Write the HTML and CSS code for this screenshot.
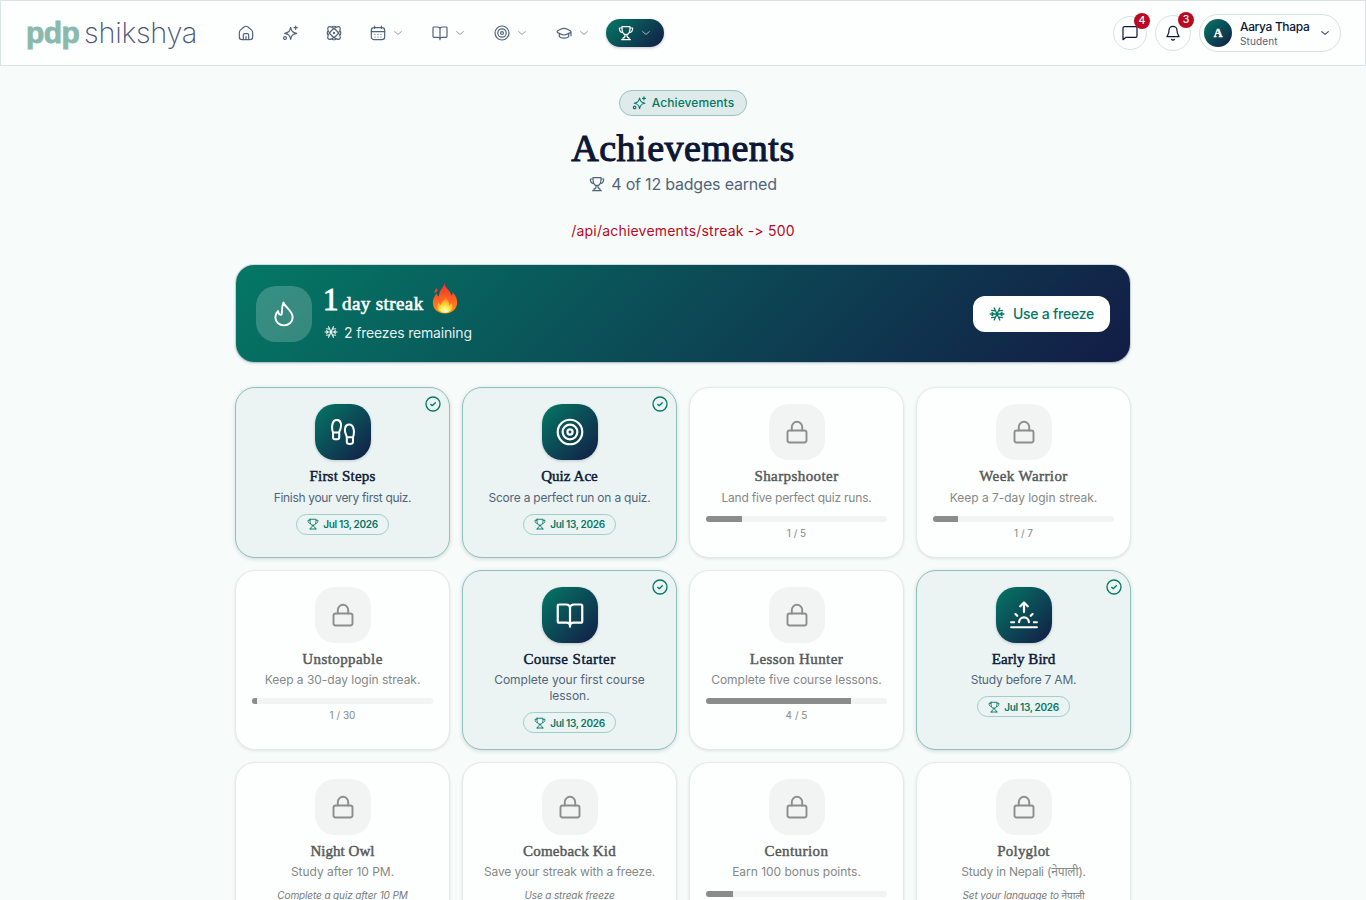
FILE: index.html
```html
<!DOCTYPE html>
<html lang="en">
<head>
<meta charset="utf-8">
<title>Achievements</title>
<link rel="stylesheet" href="styles.css">
</head>
<body>
<svg class="defs" width="0" height="0">
  <defs>
    <linearGradient id="fire" x1="0" y1="0" x2="0" y2="1"><stop offset="0" stop-color="#e8302c"/><stop offset=".55" stop-color="#ff6422"/><stop offset="1" stop-color="#ff9b12"/></linearGradient>
    <radialGradient id="glow" cx=".5" cy=".9" r=".75"><stop offset="0" stop-color="#fffbe0"/><stop offset=".4" stop-color="#ffe94d"/><stop offset="1" stop-color="#ff8a1e"/></radialGradient>
  </defs>
  <symbol id="home" viewBox="0 0 24 24"><path d="M2 11.500c0-2 .6-3 2-4.200l5-4.300c2-1.500 4-1.500 6 0l5 4.300c1.400 1.200 2 2.200 2 4.200V18c0 2.800-1 4-4 4H6c-3 0-4-1.200-4-4zM8 22v-7c0-1.400.7-2 2-2h4c1.300 0 2 .6 2 2v7M12 17.500V22"/></symbol>
  <symbol id="sparkles" viewBox="0 0 24 24"><path d="M13 3.500c1.200 6 3 7.800 9 9-6 1.200-7.800 3-9 9-1.200-6-3-7.800-9-9 6-1.200 7.800-3 9-9zM20.500 1.500v5M18 4h5"/><circle cx="4.500" cy="19.500" r="2.200"/></symbol>
  <symbol id="atom" viewBox="0 0 24 24"><ellipse cx="12" cy="12" rx="12.300" ry="5.200" transform="rotate(45 12 12)"/><ellipse cx="12" cy="12" rx="12.300" ry="5.200" transform="rotate(-45 12 12)"/><path d="M9.500 2.300q2.500-.8 5 0M9.500 21.700q2.500.8 5 0M2.300 9.500q-.8 2.500 0 5M21.700 9.500q.8 2.500 0 5"/><circle cx="12" cy="12" r=".8"/></symbol>
  <symbol id="calendar" viewBox="0 0 24 24"><rect x="2" y="4" width="20" height="18" rx="4"/><path d="M7 1.800V5M17 1.800V5M2 10h20M7.500 14h.01M12 14h.01M16.500 14h.01M7.500 18h.01M12 18h.01M16.500 18h.01"/></symbol>
  <symbol id="book" viewBox="0 0 24 24"><path d="M12 6.200C12 4.200 10.500 3 8.500 3H2.800c-.8 0-1.300.5-1.300 1.300v13c0 .8.500 1.300 1.300 1.300H9c1.800 0 3 .8 3 2.400 0-1.600 1.200-2.400 3-2.400h6.200c.8 0 1.300-.5 1.300-1.300v-13c0-.8-.5-1.300-1.300-1.300h-5.700c-2 0-3.500 1.200-3.500 3.200zM12 6.200V22"/></symbol>
  <symbol id="target" viewBox="0 0 24 24"><circle cx="12" cy="12" r="10.500"/><circle cx="12" cy="12" r="6.300"/><circle cx="12" cy="12" r="2.200"/></symbol>
  <symbol id="cap" viewBox="0 0 24 24"><path d="M1.500 10c0-1.200 7-5 10.500-5s10.500 3.800 10.500 5-7 5-10.500 5-10.500-3.800-10.500-5zM5 12.500v5c2 3 12 3 14 0v-5M22.500 10v6"/></symbol>
  <symbol id="trophy" viewBox="0 0 24 24"><path d="M6 2.500h12c.2 6.200-.8 12-6 12s-6.200-5.800-6-12zM6 4.500H2c0 4 1.500 6.500 5 7M18 4.500h4c0 4-1.500 6.500-5 7M10.800 14.500c0 3-1 4.500-3.300 5v2.500M13.300 14.500c0 3 1 4.500 3.300 5V22M5.500 22h13"/></symbol>
  <symbol id="down" viewBox="0 0 24 24"><path d="M4 8.500l8 7 8-7"/></symbol>
  <symbol id="chat" viewBox="0 0 24 24"><path d="M3.500 2.500h17A2 2 0 0 1 22.500 4.500v12a2 2 0 0 1-2 2H6l-4.500 3.500V4.500a2 2 0 0 1 2-2z"/></symbol>
  <symbol id="bell" viewBox="0 0 24 24"><path d="M6 8a6 6 0 0 1 12 0c0 7 3 8 3 9.500H3C3 16 6 15 6 8zM10 21.500a2.300 2.300 0 0 0 4 0"/></symbol>
  <symbol id="flame" viewBox="0 0 24 24"><path d="M12 22.500c-4.500 0-8-3.200-8-7.500 0-2.500 1-4.300 2.500-5.700.3 2.200 1 3.200 2.300 3.500 2.500.3 0-5 2.700-11.300C13 6 20 9 20 15c0 4.300-3.500 7.500-8 7.500z"/></symbol>
  <symbol id="snow" viewBox="0 0 24 24"><path d="M12 12L7.800 3M12 12l4.200-9M12 12H1.800M12 12h10.400M12 12l-4.200 9M12 12l4.200 9M4 6.500l5.200.8M20 6.500l-5.200.8M4 17.500l5.200-.8M20 17.500l-5.200-.8M4.500 9.500L7 12l-2.500 2.500M19.500 9.500L17 12l2.500 2.500"/></symbol>
  <symbol id="lock" viewBox="0 0 24 24"><rect x="2.500" y="10.500" width="19" height="12" rx="2.200"/><path d="M6.800 10.500V7a5.200 5.200 0 0 1 10.400 0v3.500"/></symbol>
  <symbol id="check" viewBox="0 0 24 24"><circle cx="12" cy="12" r="10.500"/><path d="M8.500 12.500l2.300 2L15.500 10"/></symbol>
  <symbol id="steps" viewBox="0 0 24 24"><path d="M2.800 12.500C1.500 9.500 1 .8 6.500.8c4 0 4.300 5.200 3 8.700-.5 1.200-1 2-1 3zM2.800 12.500h5.700V17c0 2.300-5.700 2.300-5.700 0zM21.200 16.800c1.300-3 1.800-11.700-3.700-11.700-4 0-4.300 5.200-3 8.700.5 1.200 1 2 1 3zM21.200 16.800h-5.700v4.500c0 2.300 5.700 2.300 5.700 0z"/></symbol>
  <symbol id="sunrise" viewBox="0 0 24 24"><path d="M12 9.500V1.500M8.800 4.500L12 1.300l3.200 3.200M1 22.500h22M1 18.200h2.500M20.500 18.200H23M4.700 11.200l1.500 1.500M19.300 11.200l-1.500 1.500M7.800 18.200a4.200 4.200 0 0 1 8.400 0"/></symbol>
</svg>

<header class="topbar">
  <div class="logo"><b class="logo-pdp">pdp</b><span class="logo-name">shikshya</span></div>
  <nav class="nav">
    <a class="nav-item"><svg class="i16"><use href="#home"/></svg></a>
    <a class="nav-item"><svg class="i16"><use href="#sparkles"/></svg></a>
    <a class="nav-item"><svg class="i16"><use href="#atom"/></svg></a>
    <a class="nav-item"><svg class="i16"><use href="#calendar"/></svg><svg class="chev"><use href="#down"/></svg></a>
    <a class="nav-item"><svg class="i16"><use href="#book"/></svg><svg class="chev"><use href="#down"/></svg></a>
    <a class="nav-item"><svg class="i16"><use href="#target"/></svg><svg class="chev"><use href="#down"/></svg></a>
    <a class="nav-item"><svg class="i16"><use href="#cap"/></svg><svg class="chev"><use href="#down"/></svg></a>
    <a class="nav-item active"><svg class="i16"><use href="#trophy"/></svg><svg class="chev"><use href="#down"/></svg></a>
  </nav>
  <div class="actions">
    <div class="round chat"><svg class="i16"><use href="#chat"/></svg><span class="count">4</span></div>
    <div class="round bell"><svg class="i16"><use href="#bell"/></svg><span class="count">3</span></div>
    <div class="profile">
      <span class="avatar">A</span>
      <div class="who"><span class="name">Aarya Thapa</span><span class="role">Student</span></div>
      <svg class="pchev"><use href="#down"/></svg>
    </div>
  </div>
</header>

<main class="page">
  <div class="tag"><svg class="i14"><use href="#sparkles"/></svg><span class="tag-text">Achievements</span></div>
  <h1 class="title">Achievements</h1>
  <div class="summary"><svg class="i16"><use href="#trophy"/></svg><span class="summary-text">4 of 12 badges earned</span></div>
  <p class="error">/api/achievements/streak -&gt; 500</p>

  <section class="streak">
    <div class="streak-icon"><svg class="i26"><use href="#flame"/></svg></div>
    <div class="streak-body">
      <div class="streak-line"><span class="num">1</span><span class="days">day streak</span>
        <svg class="fire" viewBox="0 0 26 32"><path fill="url(#fire)" d="M12.500 0c.2 4 3.500 6 5.500 9 .8 1.200 1.300 2.600 1.500 4 1-.8 1.500-2 1.400-3.500C23.500 12 26 16.500 25.500 21c-.6 6.500-5.500 10.500-12.500 10.500S.8 27.500.5 21C.2 16.500 2.500 13.500 4 10.500c.6 1.600 1.400 2.700 2.700 3.500C6.500 8.500 11 5.500 12.500 0zM4 5.500C6.300 6.500 5 9 3.200 10 1.500 10.500 2.500 7.500 4 5.500z"/><path fill="url(#glow)" d="M13.500 14c1 4 4.500 5 3.500 9 1.200-.5 2-1.500 2.200-3 2 3 2.300 5.500 0 8-3 3.500-9.500 3.500-12.500 0-2.500-3-2-5.500 0-8.500.2 1.700.8 2.700 2 3.500-.3-4 4-4 4.800-9z"/></svg>
      </div>
      <div class="freezes"><svg class="i14"><use href="#snow"/></svg><span class="freezes-text">2 freezes remaining</span></div>
    </div>
    <button class="freeze-btn"><svg class="i16"><use href="#snow"/></svg><span class="btn-text">Use a freeze</span></button>
  </section>

  <section class="grid">
    <article class="card earned"><svg class="tick"><use href="#check"/></svg><div class="tile"><svg class="i26"><use href="#steps"/></svg></div><h2 class="badge-name">First Steps</h2><p class="desc snug">Finish your very first quiz.</p><div class="date"><svg class="i12"><use href="#trophy"/></svg><span>Jul 13, 2026</span></div></article>
    <article class="card earned"><svg class="tick"><use href="#check"/></svg><div class="tile"><svg class="i28"><use href="#target"/></svg></div><h2 class="badge-name tight">Quiz Ace</h2><p class="desc close">Score a perfect run on a quiz.</p><div class="date"><svg class="i12"><use href="#trophy"/></svg><span>Jul 13, 2026</span></div></article>
    <article class="card locked"><div class="tile"><svg class="i24"><use href="#lock"/></svg></div><h2 class="badge-name wide">Sharpshooter</h2><p class="desc close">Land five perfect quiz runs.</p><div class="bar"><div class="fill" style="width:20%"></div></div><p class="progress">1 / 5</p></article>
    <article class="card locked"><div class="tile"><svg class="i24"><use href="#lock"/></svg></div><h2 class="badge-name wide">Week Warrior</h2><p class="desc">Keep a 7-day login streak.</p><div class="bar"><div class="fill" style="width:14%"></div></div><p class="progress">1 / 7</p></article>

    <article class="card locked"><div class="tile"><svg class="i24"><use href="#lock"/></svg></div><h2 class="badge-name wide">Unstoppable</h2><p class="desc">Keep a 30-day login streak.</p><div class="bar"><div class="fill" style="width:3%"></div></div><p class="progress">1 / 30</p></article>
    <article class="card earned"><svg class="tick"><use href="#check"/></svg><div class="tile"><svg class="i28"><use href="#book"/></svg></div><h2 class="badge-name wide">Course Starter</h2><p class="desc">Complete your first course<br>lesson.</p><div class="date"><svg class="i12"><use href="#trophy"/></svg><span>Jul 13, 2026</span></div></article>
    <article class="card locked"><div class="tile"><svg class="i24"><use href="#lock"/></svg></div><h2 class="badge-name wide">Lesson Hunter</h2><p class="desc">Complete five course lessons.</p><div class="bar"><div class="fill" style="width:80%"></div></div><p class="progress">4 / 5</p></article>
    <article class="card earned"><svg class="tick"><use href="#check"/></svg><div class="tile"><svg class="i28"><use href="#sunrise"/></svg></div><h2 class="badge-name tight">Early Bird</h2><p class="desc close">Study before 7 AM.</p><div class="date"><svg class="i12"><use href="#trophy"/></svg><span>Jul 13, 2026</span></div></article>

    <article class="card locked"><div class="tile"><svg class="i24"><use href="#lock"/></svg></div><h2 class="badge-name tight">Night Owl</h2><p class="desc">Study after 10 PM.</p><p class="hint">Complete a quiz after 10 PM</p></article>
    <article class="card locked"><div class="tile"><svg class="i24"><use href="#lock"/></svg></div><h2 class="badge-name">Comeback Kid</h2><p class="desc near">Save your streak with a freeze.</p><p class="hint">Use a streak freeze</p></article>
    <article class="card locked"><div class="tile"><svg class="i24"><use href="#lock"/></svg></div><h2 class="badge-name wide">Centurion</h2><p class="desc">Earn 100 bonus points.</p><div class="bar"><div class="fill" style="width:15%"></div></div></article>
    <article class="card locked"><div class="tile"><svg class="i24"><use href="#lock"/></svg></div><h2 class="badge-name">Polyglot</h2><p class="desc close">Study in Nepali (नेपाली).</p><p class="hint">Set your language to नेपाली</p></article>
  </section>
</main>
</body>
</html>
```
FILE: styles.css
```css
* { box-sizing: border-box; }
html, body { height: 900px; overflow: hidden; }
body { margin: 0; background: #f7fbfa; color: #0c1736; font-family: Inter, "Noto Sans", sans-serif; }
h1, h2, p { margin: 0; }
svg { display: block; flex: none; fill: none; stroke: currentColor; stroke-width: 1.8; stroke-linecap: round; stroke-linejoin: round; }
.defs { position: absolute; }
.i12 { width: 12px; height: 12px; }
.i14 { width: 14px; height: 14px; }
.i16 { width: 16px; height: 16px; }
.i24 { width: 24px; height: 24px; }
.i26 { width: 26px; height: 26px; }
.i28 { width: 28px; height: 28px; }

.topbar { display: flex; align-items: center; height: 66px; padding: 0 24px 0 25px; border: 1px solid #dae6e5; background: #fdfefe; }
.logo { display: flex; align-items: baseline; width: 200px; padding-bottom: 1px; line-height: 36px; white-space: nowrap; }
.logo-pdp { width: 58px; font: bold 30px/36px "Liberation Sans", sans-serif; letter-spacing: -.6px; color: #8bb9ad; -webkit-text-stroke: .8px #8bb9ad; }
.logo-name { font-size: 29px; font-weight: 200; letter-spacing: -.25px; color: #4b5378; }
.nav { display: flex; gap: 4px; color: #52647b; }
.nav-item { display: flex; align-items: center; gap: 6px; height: 28px; padding: 0 12px; border-radius: 14px; }
.nav .chev { width: 12px; height: 12px; padding: 1px; opacity: .7; stroke-width: 2.2; }
.active { color: #fff; background: linear-gradient(135deg, #047865, #131c46); box-shadow: 0 1px 3px rgba(15, 30, 60, .25); }
.actions { display: flex; align-items: center; gap: 8px; margin-left: auto; }
.round { position: relative; display: flex; align-items: center; justify-content: center; border: 1px solid #d5e4e2; border-radius: 50%; background: #fdfefe; color: #0c1736; }
.chat { width: 34px; height: 34px; }
.bell { width: 36px; height: 36px; }
.count { position: absolute; top: -4px; right: -4px; width: 16px; height: 16px; border-radius: 8px; background: #b90a22; color: #fff; font-size: 10.5px; font-weight: 500; line-height: 16px; text-align: center; }
.profile { display: flex; align-items: center; width: 142px; height: 38px; padding: 0 9px 0 4px; border: 1px solid #d5e4e2; border-radius: 19px; background: #fdfefe; }
.avatar { width: 28px; height: 28px; border-radius: 50%; background: linear-gradient(135deg, #047865, #131c46); color: #fff; font: bold 12px/28px "Liberation Serif", serif; text-align: center; -webkit-text-stroke: .5px #fff; }
.who { display: flex; flex-direction: column; width: 78px; margin-left: 8px; white-space: nowrap; }
.name { font-size: 12px; font-weight: 500; line-height: 15px; letter-spacing: -.35px; }
.role { font-size: 10px; line-height: 14px; color: #52647b; letter-spacing: .15px; }
.pchev { width: 12px; height: 12px; margin-left: 1px; padding: 1px; color: #3c4c66; stroke-width: 2.6; }

.page { display: flex; flex-direction: column; align-items: center; width: 896px; margin: 24px auto 0; }
.tag { display: flex; align-items: center; gap: 6px; height: 26px; padding: 0 12px; border: 1px solid #93c5bb; border-radius: 13px; background: #deebea; color: #047865; }
.tag svg { stroke-width: 2; }
.tag-text { padding-bottom: 2px; font-size: 12px; font-weight: 450; letter-spacing: .08px; }
.title { margin-top: 11px; font: 400 38px/42px "Liberation Serif", serif; letter-spacing: .5px; -webkit-text-stroke: 1.1px #0c1736; }
.summary { display: flex; align-items: center; gap: 6px; height: 24px; margin-top: 3px; color: #52647b; }
.summary-text { font-size: 16px; letter-spacing: -.2px; }
.error { height: 20px; margin-top: 25px; color: #b90a22; font-size: 14px; line-height: 20px; letter-spacing: .2px; font-variant-ligatures: none; font-feature-settings: "calt" 0; }
.streak { display: flex; align-items: center; width: 894px; height: 97px; margin-top: 24px; padding: 0 20px; border-radius: 18px; background: linear-gradient(135deg, #047865, #131c46); color: #fff; box-shadow: 0 0 0 1px rgba(12, 60, 80, .12), 0 1px 3px rgba(12, 30, 60, .25); }
.streak-icon { display: flex; align-items: center; justify-content: center; width: 56px; height: 56px; border-radius: 20px; background: rgba(255, 255, 255, .2); }
.streak-body { margin-left: 12px; margin-top: -2px; }
.streak-line { display: flex; align-items: baseline; height: 36px; font-family: "Liberation Serif", serif; }
.num { width: 18px; margin-left: -1px; margin-right: 1px; font-size: 31px; line-height: 33px; -webkit-text-stroke: 1px #fff; }
.days { font-size: 19px; line-height: 33px; letter-spacing: .4px; -webkit-text-stroke: .6px #fff; }
.fire { width: 26px; height: 31px; margin-left: 8px; align-self: flex-start; stroke: none; }
.freezes { display: flex; align-items: center; gap: 6px; height: 20px; margin-top: 3px; color: rgba(255, 255, 255, .92); }
.freezes-text { font-size: 14px; letter-spacing: -.17px; }
.freeze-btn { display: flex; align-items: center; gap: 8px; height: 36px; margin-left: auto; padding: 0 16px; border: 0; border-radius: 12px; background: #fff; color: #047865; font-family: inherit; }
.btn-text { font-size: 14px; font-weight: 500; letter-spacing: -.25px; }
.freezes svg, .freeze-btn svg { stroke-width: 2; }

.grid { display: grid; grid-template-columns: repeat(4, 215px); gap: 12px; margin-top: 25.4px; }
.card { position: relative; display: flex; flex-direction: column; align-items: center; min-height: 170.2px; padding: 16px; border: 1px solid #e3eae9; border-radius: 20px; background: #fdfefe; box-shadow: 0 1px 3px rgba(15, 30, 50, .1); }
.earned { border-color: #8cc2b8; background: #ebf4f3; box-shadow: 0 1px 4px rgba(15, 30, 50, .16); }
.tick { position: absolute; top: 8px; right: 8px; width: 16px; height: 16px; color: #047865; stroke-width: 2; }
.tile { display: flex; align-items: center; justify-content: center; width: 56px; height: 56px; border-radius: 20px; background: #f2f3f3; color: #8c8e8d; }
.earned .tile { background: linear-gradient(135deg, #047865, #131c46); color: #fff; box-shadow: 0 1px 3px rgba(15, 30, 50, .2); }
.tile svg { stroke-width: 1.9; }
.badge-name { margin-top: 8px; font: 400 15px/17.5px "Liberation Serif", serif; letter-spacing: .2px; -webkit-text-stroke: .45px currentColor; }
.wide { letter-spacing: .42px; }
.tight { letter-spacing: .05px; }
.desc { margin-top: 3.75px; color: #52647b; font-size: 12px; line-height: 16px; letter-spacing: -.02px; text-align: center; white-space: nowrap; }
.near { letter-spacing: -.12px; }
.close { letter-spacing: -.2px; }
.snug { letter-spacing: -.33px; }
.locked .badge-name { color: #555958; }
.locked .desc { color: #858987; }
.date { display: flex; align-items: center; gap: 4px; height: 21px; margin-top: 8px; padding: 0 10px; border: 1px solid #9fcfc5; border-radius: 11px; color: #047865; font-size: 10px; font-weight: 600; letter-spacing: -.33px; white-space: nowrap; }
.bar { width: 181px; height: 6px; margin-top: 10.2px; border-radius: 3px; background: #f2f3f3; overflow: hidden; }
.fill { height: 6px; background: #8a8c8b; }
.progress { margin-top: 4px; color: #858987; font-size: 10px; line-height: 15px; }
.hint { margin-top: 8px; color: #777b79; font-size: 10px; font-style: italic; line-height: 15px; letter-spacing: -.12px; white-space: nowrap; }
```
